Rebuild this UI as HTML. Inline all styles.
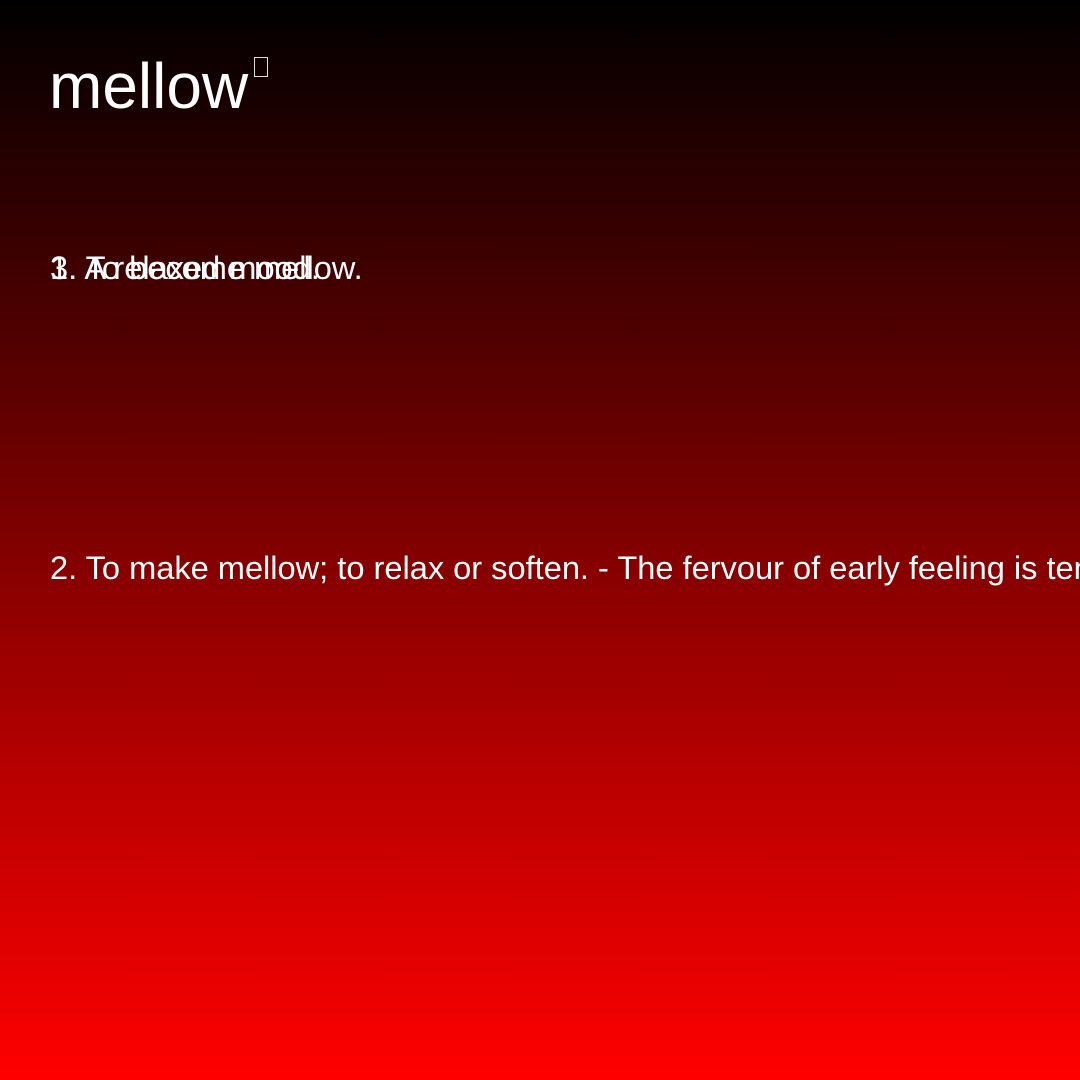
<!DOCTYPE html>
<html><head><style>
html,body{margin:0;padding:0}
body{width:1080px;height:1080px;overflow:hidden;position:relative;background:linear-gradient(to bottom,#000 0%,#ff0000 100%);font-family:"Liberation Sans",sans-serif;color:#fff}
.wrap{position:absolute;left:0;top:0;width:1080px;height:1080px;overflow:hidden}
.t{position:absolute;left:49px;top:46px;font-size:64px;line-height:80px;white-space:nowrap}
.box{position:absolute;left:254px;top:57px;width:14px;height:20px;border:1px solid #ddd;box-sizing:border-box}
.l{position:absolute;left:50px;font-size:32.6px;line-height:38px;white-space:nowrap}
</style></head><body><div class="wrap">
<div class="t">mellow</div><div class="box"></div>
<div class="l" style="top:249px">1. A relaxed mood.</div>
<div class="l" style="top:249px">3. To become mellow.</div>
<div class="l" style="top:549px;width:1030px;overflow:hidden">2. To make mellow; to relax or soften. - The fervour of early feeling is tempered and mellowed by the ripeness of age.</div>
</div></body></html>
